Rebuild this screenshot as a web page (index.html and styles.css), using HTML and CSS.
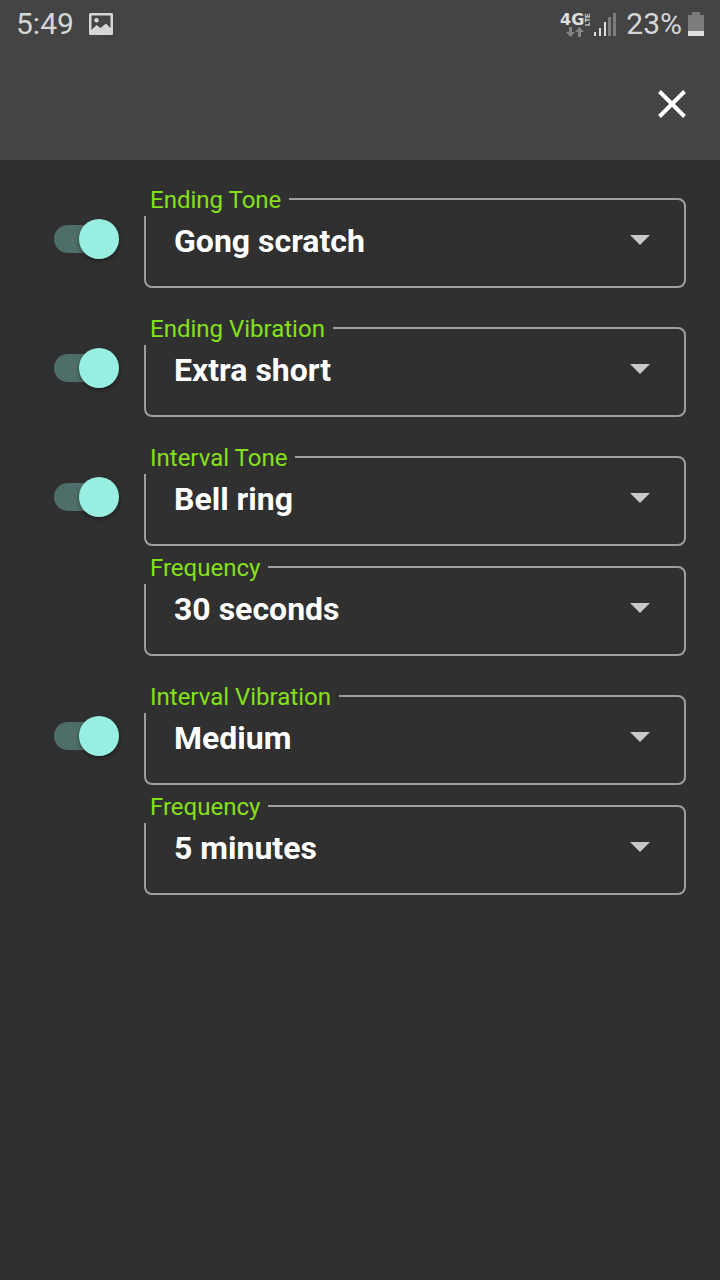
FILE: index.html
```html
<!DOCTYPE html>
<html lang="en">
<head>
<meta charset="utf-8">
<meta name="viewport" content="width=device-width, initial-scale=1">
<title>Timer sounds</title>
<link rel="stylesheet" href="styles.css">
</head>
<body>
<header class="top">
  <div class="status">
    <div class="status-group">
      <span class="time">5:49</span>
      <svg class="picture" width="24" height="22" viewBox="0 0 24 22" aria-hidden="true">
        <path fill="#d6d6d6" fill-rule="evenodd" d="M1.500 0H22.500Q24 0 24 1.500V20.500Q24 22 22.500 22H1.500Q0 22 0 20.500V1.500Q0 0 1.500 0ZM2.500 2.500V17L7.500 12L11.500 15L17 10.500L21.500 15V2.500ZM7.500 5A2.300 2.300 0 1 1 7.490 5Z"/>
      </svg>
    </div>
    <div class="status-group status-right">
      <svg class="network" width="30" height="28" viewBox="0 0 30 28" aria-label="4G LTE">
        <text class="net-big" x="0" y="15">4G</text>
        <text class="net-small" transform="translate(30 16) rotate(-90)">LTE</text>
        <path fill="#858585" d="M9 17h3v5h3L10.500 27L6 22h3zM18 27h3v-5h3L19.500 17L15 22h3z"/>
      </svg>
      <svg class="signal" width="22" height="24" viewBox="0 0 22 24" aria-hidden="true">
        <path fill="#dedede" d="M0 20h2v4h-2zM5 16h2v8h-2zM10 10h2v14h-2z"/>
        <path fill="#7c7c7c" d="M14 5h3v19h-3zM19 1h3v23h-3z"/>
      </svg>
      <span class="percent">23%</span>
      <svg class="battery" width="16" height="24" viewBox="0 0 16 24" aria-hidden="true">
        <path fill="#7c7c7c" d="M4 0h8v3h4v16H0V3h4z"/>
        <path fill="#dedede" d="M0 19h16v5H0z"/>
      </svg>
    </div>
  </div>
  <div class="bar">
    <button class="close" type="button" aria-label="Close">
      <svg width="28" height="28" viewBox="0 0 28 28" aria-hidden="true"><path d="M1.500 1.500L26.500 26.500M26.500 1.500L1.500 26.500" stroke="#fff" stroke-width="4"/></svg>
    </button>
  </div>
</header>
<main class="settings">
  <section class="row">
    <input class="switch" type="checkbox" role="switch" aria-label="Ending Tone on" checked>
    <div class="fields">
      <div class="field">
        <label class="label" for="ending-tone">Ending Tone</label>
        <select class="select" id="ending-tone"><option>Gong scratch</option></select>
        <span class="arrow"></span>
      </div>
    </div>
  </section>
  <section class="row">
    <input class="switch" type="checkbox" role="switch" aria-label="Ending Vibration on" checked>
    <div class="fields">
      <div class="field">
        <label class="label" for="ending-vibration">Ending Vibration</label>
        <select class="select" id="ending-vibration"><option>Extra short</option></select>
        <span class="arrow"></span>
      </div>
    </div>
  </section>
  <section class="row">
    <input class="switch" type="checkbox" role="switch" aria-label="Interval Tone on" checked>
    <div class="fields">
      <div class="field">
        <label class="label" for="interval-tone">Interval Tone</label>
        <select class="select" id="interval-tone"><option>Bell ring</option></select>
        <span class="arrow"></span>
      </div>
      <div class="field">
        <label class="label" for="tone-frequency">Frequency</label>
        <select class="select" id="tone-frequency"><option>30 seconds</option></select>
        <span class="arrow"></span>
      </div>
    </div>
  </section>
  <section class="row">
    <input class="switch" type="checkbox" role="switch" aria-label="Interval Vibration on" checked>
    <div class="fields">
      <div class="field">
        <label class="label" for="interval-vibration">Interval Vibration</label>
        <select class="select" id="interval-vibration"><option>Medium</option></select>
        <span class="arrow"></span>
      </div>
      <div class="field">
        <label class="label" for="vibration-frequency">Frequency</label>
        <select class="select" id="vibration-frequency"><option>5 minutes</option></select>
        <span class="arrow"></span>
      </div>
    </div>
  </section>
</main>
</body>
</html>
```
FILE: styles.css
```css
* {
  box-sizing: border-box;
}

body {
  margin: 0;
  min-height: 100vh;
  background: #303030;
  color: #fff;
  font-family: Roboto, "Liberation Sans", sans-serif;
}

.top {
  background: #444;
}

.status {
  display: flex;
  justify-content: space-between;
  align-items: center;
  height: 48px;
  padding: 0 16px;
  color: #d6d6d6;
  font-size: 30px;
  line-height: 50px;
}

.status-group {
  display: flex;
  align-items: center;
  gap: 15px;
}

.status-right {
  gap: 6px;
}

.network {
  margin-right: -2px;
}

.signal {
  margin-right: 4px;
}

.net-big {
  fill: #dedede;
  font: bold 16px "DejaVu Sans", sans-serif;
}

.net-small {
  fill: #dedede;
  font: bold 7px "Liberation Sans", sans-serif;
}

.bar {
  display: flex;
  justify-content: flex-end;
  align-items: center;
  height: 112px;
  padding-right: 24px;
}

.close {
  display: grid;
  place-items: center;
  width: 48px;
  height: 48px;
  padding: 0;
  border: 0;
  background: none;
}

.settings {
  display: flex;
  flex-direction: column;
  gap: 39px;
  padding: 38px 34px 38px 54px;
}

.row {
  display: flex;
  align-items: flex-start;
  gap: 25px;
}

.switch {
  appearance: none;
  position: relative;
  flex: none;
  width: 65px;
  height: 40px;
  margin: 21px 0 0;
}

.switch::before {
  content: "";
  position: absolute;
  inset: 6px 6px 6px 0;
  border-radius: 14px;
  background: #506e69;
}

.switch::after {
  content: "";
  position: absolute;
  top: 0;
  right: 0;
  width: 40px;
  height: 40px;
  border-radius: 50%;
  background: #98eee0;
  box-shadow: 0 2px 4px rgba(0, 0, 0, 0.4);
}

.fields {
  flex: 1;
  display: flex;
  flex-direction: column;
  gap: 20px;
}

.field {
  position: relative;
}

.label {
  position: absolute;
  top: -12px;
  left: 0;
  padding: 0 8px 1px 6px;
  background: #303030;
  color: #85e01b;
  font-size: 24px;
  line-height: 29px;
}

.select {
  appearance: none;
  display: block;
  width: 100%;
  height: 90px;
  margin: 0;
  padding: 0 64px 4px 28px;
  border: 2px solid #9e9e9e;
  border-radius: 8px;
  background: transparent;
  color: #fff;
  font: bold 32px Roboto, "Liberation Sans", sans-serif;
}

.arrow {
  position: absolute;
  top: 37px;
  right: 36px;
  border: 10px solid transparent;
  border-top-color: #c8c8c8;
  border-bottom: 0;
  pointer-events: none;
}
```
